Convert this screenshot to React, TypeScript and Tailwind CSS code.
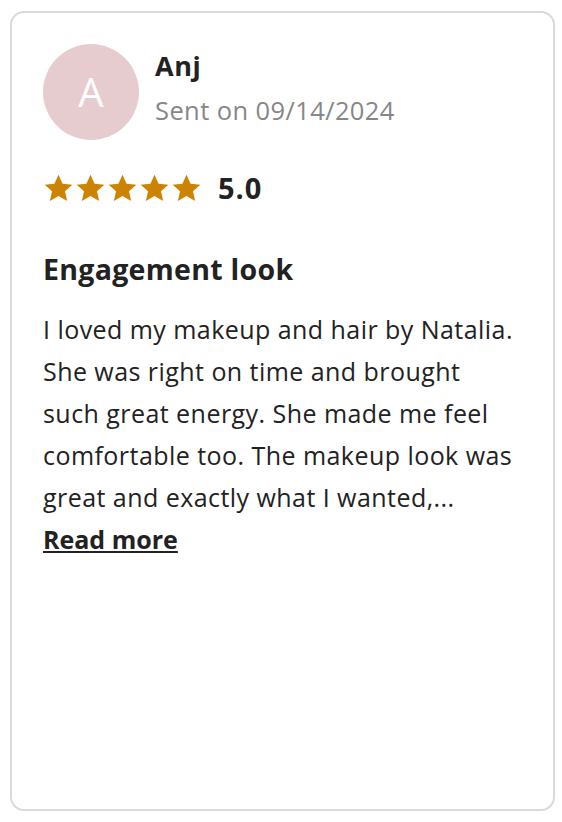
import React from 'react';

const Star = () => (
  <svg viewBox="0 0 24 24" className="w-[31px] h-[31px]" fill="#cc8400">
    <path d="M12 1.4l3.15 6.95 7.55.75-5.7 5.05 1.7 7.45L12 17.75l-6.7 3.85 1.7-7.45-5.7-5.05 7.55-.75z" />
  </svg>
);

const lines = [
  'I loved my makeup and hair by Natalia.',
  'She was right on time and brought',
  'such great energy. She made me feel',
  'comfortable too. The makeup look was',
  'great and exactly what I wanted,...',
];

export default function App() {
  return (
    <div className="w-[562px] h-[822px] bg-white pt-[11px] pl-[10px] font-['Open_Sans',sans-serif] text-[#222]">
      <div className="w-[545px] h-[800px] border-2 border-[#dadada] rounded-[14px] px-[31px] pt-[31px]">
        <div className="flex items-start gap-4">
          <div className="w-[96px] h-[96px] rounded-full bg-[#e6cccf] flex items-center justify-center text-white text-[40px]">
            A
          </div>
          <div className="flex flex-col pt-[5px]">
            <p className="m-0 text-[27px] font-bold leading-[34px] tracking-[0.6px]">Anj</p>
            <p className="m-0 mt-[10px] text-[25.5px] leading-[34px] tracking-[0.4px] text-[#878787]">Sent on 09/14/2024</p>
          </div>
        </div>

        <div className="flex items-center h-[30px] mt-[33px]">
          <div className="flex gap-[1px]">
            <Star />
            <Star />
            <Star />
            <Star />
            <Star />
          </div>
          <span className="ml-[16px] text-[29px] font-bold leading-[30px] tracking-[1px]">5.0</span>
        </div>

        <h2 className="mt-[48px] text-[28.5px] font-bold leading-[36px] tracking-[0.3px]">Engagement look</h2>

        <p className="mt-[21px] text-[25px] leading-[42px] tracking-[0.45px] whitespace-nowrap">
          {lines.map((l) => (
            <span key={l} className="block">
              {l}
            </span>
          ))}
        </p>
        <a className="text-[25px] font-bold underline leading-[42px]">Read more</a>
      </div>
    </div>
  );
}
